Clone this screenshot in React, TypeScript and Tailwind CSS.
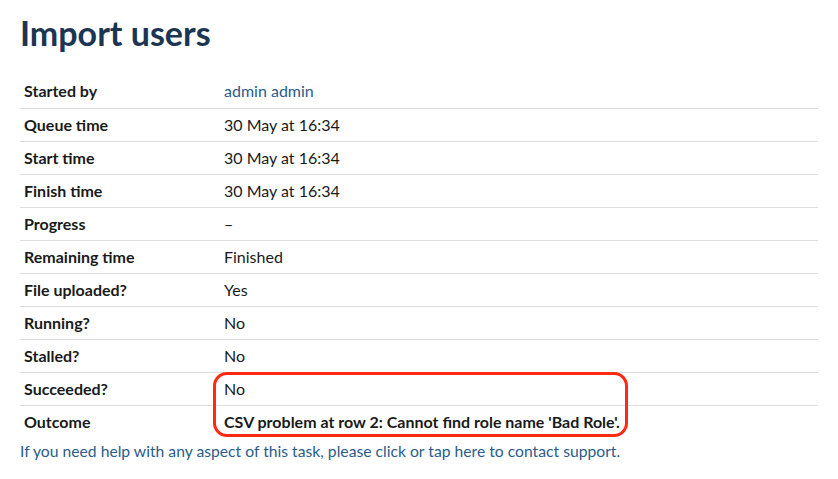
const rows: { label: string; value: string; link?: boolean; bold?: boolean }[] = [
  { label: 'Started by', value: 'admin admin', link: true },
  { label: 'Queue time', value: '30 May at 16:34' },
  { label: 'Start time', value: '30 May at 16:34' },
  { label: 'Finish time', value: '30 May at 16:34' },
  { label: 'Progress', value: '–' },
  { label: 'Remaining time', value: 'Finished' },
  { label: 'File uploaded?', value: 'Yes' },
  { label: 'Running?', value: 'No' },
  { label: 'Stalled?', value: 'No' },
  { label: 'Succeeded?', value: 'No' },
  { label: 'Outcome', value: "CSV problem at row 2: Cannot find role name 'Bad Role'.", bold: true },
];

export default function App() {
  return (
    <div className="min-h-[479px] w-[838px] bg-white px-5 pt-[12px] font-['Lato',sans-serif] text-[16px] text-[#1a1a1a]">
      <h1 className="text-[34px] font-bold leading-[42px] text-[#1b3553]">Import users</h1>
      <div className="relative mt-[21px]">
        <table className="w-full border-collapse">
          <tbody>
            {rows.map((r, i) => (
              <tr key={r.label} className={i < rows.length - 1 ? 'border-b border-[#dedede]' : ''}>
                <td className="h-[33px] w-[200px] px-1 align-middle font-bold">{r.label}</td>
                <td className={'h-[33px] px-1 align-middle ' + (r.bold ? 'font-bold' : '')}>
                  {r.link ? <a className="text-[#2b5c8a]">{r.value}</a> : r.value}
                </td>
              </tr>
            ))}
          </tbody>
        </table>
        <div className="pointer-events-none absolute left-[193px] top-[297px] h-[65px] w-[415px] rounded-[14px] border-[3px] border-[#ff2a12]" />
      </div>
      <p className="mt-[1px] text-[15.7px] leading-[24px] text-[#2b5c8a]">If you need help with any aspect of this task, please click or tap here to contact support.</p>
    </div>
  );
}
